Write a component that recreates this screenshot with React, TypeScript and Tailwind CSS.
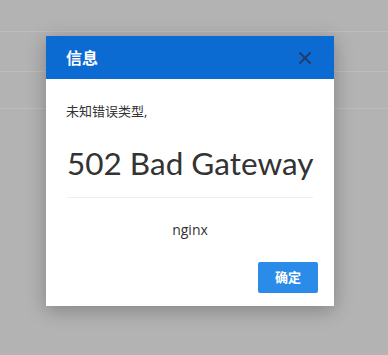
import { X } from 'lucide-react'

const font = { fontFamily: '"Open Sans", "Noto Sans CJK SC", sans-serif' }

export default function App() {
  return (
    <div className="relative w-[388px] h-[355px] overflow-hidden bg-[#b3b3b3]" style={font}>
      {/* page behind the mask */}
      <div className="flex flex-col">
        <div className="h-[32px] border-b border-[#bdbdbd]" />
        <div className="h-[40px] border-b border-[#bdbdbd]" />
        <div className="h-[37px] border-b border-[#bdbdbd]" />
      </div>

      <div className="absolute left-[46px] top-[36px] w-[288px] bg-white shadow-[0_4px_18px_rgba(0,0,0,0.28)]">
        <div className="h-[43px] px-5 flex items-center justify-between bg-[#0c6bd2]">
          <span className="text-white text-[16px] font-bold">信息</span>
          <X className="w-5 h-5 -mr-[1px] text-[#1d3f70]" strokeWidth={2.4} />
        </div>
        <div className="px-5 pt-[22px] pb-[13px]">
          <p className="text-[13px] leading-5 text-[#333]">未知错误类型,</p>
          <div className="px-px">
            <h1
              className="mt-[22px] text-[31.5px] leading-[40px] text-[#333] font-normal whitespace-nowrap"
              style={{ fontFamily: 'Lato, sans-serif' }}
            >
              502 Bad Gateway
            </h1>
            <hr className="mt-[14px] border-[#eeeeee]" />
            <p className="mt-[22px] text-center text-[14px] leading-5 text-[#333]">nginx</p>
          </div>
          <div className="mt-[22px] -mr-1 flex justify-end">
            <button className="w-[60px] h-[31px] rounded-[2px] bg-[#2b8be8] text-white text-[13px] font-bold">确定</button>
          </div>
        </div>
      </div>
    </div>
  )
}
